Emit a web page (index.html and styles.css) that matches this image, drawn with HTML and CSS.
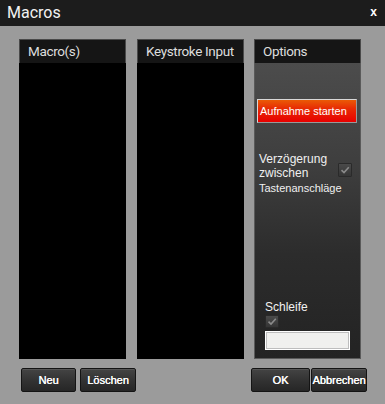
FILE: index.html
```html
<!DOCTYPE html>
<html>
<head>
<meta charset="utf-8">
<link rel="stylesheet" href="styles.css">
</head>
<body>
<div class="window">
  <div class="titlebar">
    <span class="title">Macros</span>
    <span class="close">x</span>
  </div>
  <div class="content">
    <div class="panels">
      <div class="panel">
        <div class="panel-head">Macro(s)</div>
        <div class="panel-body"></div>
      </div>
      <div class="panel panel-mid">
        <div class="panel-head">Keystroke Input</div>
        <div class="panel-body"></div>
      </div>
      <div class="panel">
        <div class="panel-head">Options</div>
        <div class="panel-body options">
          <div class="rec-btn">Aufnahme starten</div>
          <div class="delay">
            <div class="l1">Verzögerung</div>
            <div class="l1 row">
              <span>zwischen</span>
              <span class="check check-delay"><svg width="14" height="14" viewBox="0 0 14 14"><path d="M3.5 7.2 L6 9.6 L10.8 4.2" fill="none" stroke="#8a8a8a" stroke-width="1.6"/></svg></span>
            </div>
            <div class="l2">Tastenanschläge</div>
          </div>
          <div class="loop">
            <div class="loop-label">Schleife</div>
            <span class="check"><svg width="14" height="13" viewBox="0 0 14 13"><path d="M3.5 6.7 L6 9.1 L10.8 3.7" fill="none" stroke="#8a8a8a" stroke-width="1.6"/></svg></span>
            <div class="loop-input"></div>
          </div>
        </div>
      </div>
    </div>
    <div class="buttons">
      <div class="btn-group">
        <div class="btn w55">Neu</div>
        <div class="btn w56">Löschen</div>
      </div>
      <div class="btn-group right">
        <div class="btn w59">OK</div>
        <div class="btn w56">Abbrechen</div>
      </div>
    </div>
  </div>
</div>
</body>
</html>
```

FILE: styles.css
```css
* { box-sizing: border-box; }
html, body { margin: 0; padding: 0; }
body {
  width: 385px;
  height: 404px;
  background: #9b9b9b;
  font-family: "Liberation Sans", Arial, sans-serif;
  overflow: hidden;
}
.window { width: 385px; height: 404px; }
.titlebar {
  height: 26px;
  background: #1c1c1c;
  display: flex;
  align-items: center;
  justify-content: space-between;
  padding: 0 8px 0 7px;
}
.title {
  font-family: Roboto, sans-serif;
  font-size: 16px;
  color: #f2f2f2;
  line-height: 26px;
}
.close {
  font-family: "Liberation Sans", Arial, sans-serif;
  font-weight: bold;
  font-size: 12px;
  color: #fff;
  margin-top: -2px;
}
.content { padding: 13px 0 0 19px; }
.panels {
  display: flex;
  gap: 10px;
  height: 320px;
}
.panel {
  width: 107px;
  display: flex;
  flex-direction: column;
}
.panel-mid { margin-left: 1px; }
.panel-head {
  height: 24px;
  background: #151515;
  border: 1px solid #4a4a4a;
  border-bottom: none;
  color: #dedede;
  font-family: Roboto, sans-serif;
  font-size: 13.5px;
  letter-spacing: -0.35px;
  line-height: 22px;
  padding-left: 8px;
}
.panel-body {
  flex: 1;
  background: #000;
}
.options {
  background: linear-gradient(#4c4c4c 0%, #3e3e3e 35%, #2c2c2c 65%, #232323 100%);
  border: 1px solid #5a5a5a;
  border-top: none;
  padding: 36px 3px 0 2px;
}
.rec-btn {
  height: 24px;
  width: 100px;
  border: 1px solid #d8d8d8;
  border-right-color: #999;
  border-bottom-color: #999;
  background: linear-gradient(#ea5a06 0%, #e82a04 40%, #e80000 100%);
  color: #fff;
  font-size: 11px;
  line-height: 22px;
  padding-left: 2px;
  white-space: nowrap;
}
.delay {
  margin-top: 29px;
  padding-left: 2px;
  width: 95px;
  color: #f0f0f0;
}
.l1 { font-size: 12px; line-height: 14px; }
.row {
  display: flex;
  justify-content: space-between;
  align-items: flex-start;
}
.l2 { font-size: 11px; line-height: 14px; margin-top: 1px; }
.check {
  display: block;
  flex-shrink: 0;
  width: 14px;
  height: 13px;
  background: linear-gradient(#4a4a4a, #353535);
  border: 1px solid #2a2a2a;
  border-radius: 1px;
  overflow: hidden;
}
.check svg { display: block; margin: -1px; }
.check-delay { height: 14px; margin-top: -3px; margin-bottom: -3px; }
.loop {
  margin-top: 105px;
  padding-left: 8px;
}
.loop-label {
  color: #f2f2f2;
  font-size: 12px;
  line-height: 14px;
}
.loop .check { margin-top: 1px; }
.loop-input {
  margin-top: 3px;
  width: 85px;
  height: 19px;
  background: #f0f0ee;
  border: 1px solid #fff;
  outline: 1px solid #bdbdbd;
  outline-offset: -2px;
}
.buttons {
  display: flex;
  justify-content: space-between;
  padding: 9px 18px 0 2px;
}
.btn-group { display: flex; gap: 4px; }
.btn-group.right { gap: 1px; }
.btn {
  height: 24px;
  border: 1px solid #141414;
  border-radius: 2px;
  background: linear-gradient(#444 0%, #333 50%, #262626 100%);
  box-shadow: inset 0 1px 0 #555;
  color: #fff;
  font-size: 11px;
  line-height: 22px;
  text-align: center;
  white-space: nowrap;
  text-shadow: 0.3px 0 0 #fff;
}
.w55 { width: 55px; }
.w56 { width: 56px; }
.w59 { width: 59px; }
```
